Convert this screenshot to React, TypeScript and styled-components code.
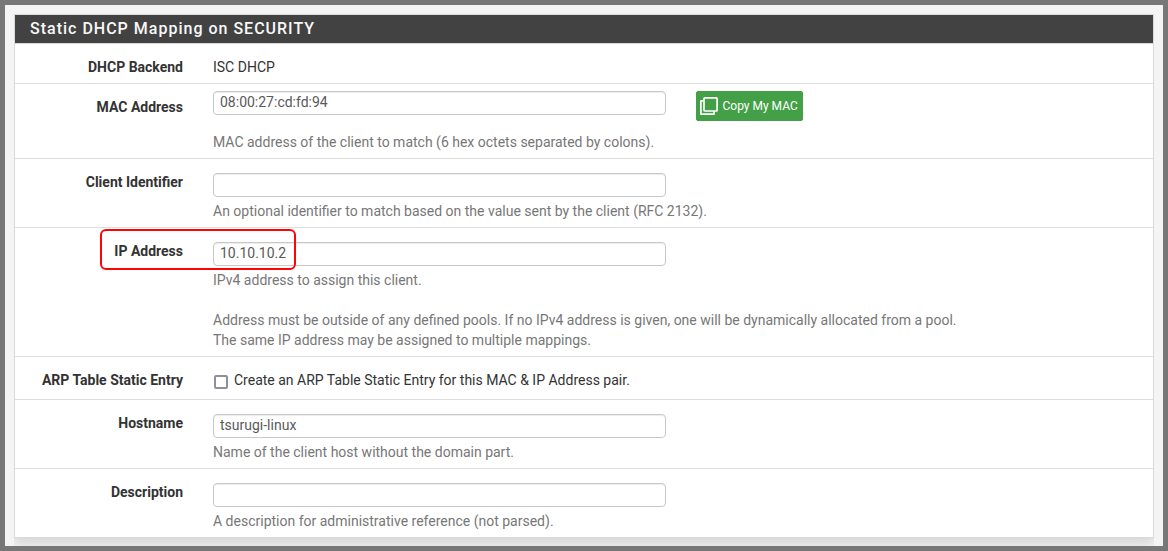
import React from 'react';
import styled, { createGlobalStyle } from 'styled-components';

const GlobalStyle = createGlobalStyle`
  *, *::before, *::after { box-sizing: border-box; }
  body {
    margin: 0;
    font-family: Roboto, "Liberation Sans", sans-serif;
    font-size: 14px;
    line-height: 20px;
    color: #333;
    background: #777;
  }
`;

const Page = styled.main`
  height: 551px;
  border: 5px solid #777;
  background: #f4f4f4;
  padding: 9px 9px 0;
  overflow: hidden;
`;

const Panel = styled.section`
  border: 1px solid #d9d9d9;
  background: #fff;
  box-shadow: 0 6px 12px rgba(0, 0, 0, 0.13);
  clip-path: inset(0 0 -20px 0);
`;

const PanelTitle = styled.h2`
  margin: 0;
  height: 29px;
  padding: 3px 15px 0;
  border-bottom: 1px solid #d9d9d9;
  background: #424242;
  color: #f8f8f8;
  font-size: 16px;
  font-weight: 500;
  line-height: 21px;
  letter-spacing: 1px;
`;

const Row = styled.div<{ $bottom?: number }>`
  position: relative;
  display: flex;
  padding-bottom: ${({ $bottom = 6 }) => $bottom}px;
  border-bottom: 1px solid #dedede;

  &:last-child {
    border-bottom: 0;
  }
`;

const Label = styled.label`
  width: 168px;
  margin-right: 30px;
  padding-top: 13px;
  text-align: right;
  font-weight: 700;
`;

const Field = styled.div<{ $top?: number }>`
  flex: 1;
  padding-top: ${({ $top = 14 }) => $top}px;
`;

const Controls = styled.div`
  display: flex;
  align-items: flex-start;
  gap: 30px;
  margin-bottom: 11px;
`;

const TextInput = styled.input<{ $lift?: number }>`
  display: block;
  width: 453px;
  height: 24px;
  margin: 0;
  padding: 0 6px ${({ $lift = 0 }) => $lift}px;
  border: 1px solid #c8c8c8;
  border-radius: 4px;
  background: #fff;
  box-shadow: inset 0 1px 1px rgba(0, 0, 0, 0.075);
  color: #5a5a5a;
  font: inherit;
  outline: 0;
`;

const Help = styled.p<{ $gap?: number }>`
  margin: ${({ $gap = 4 }) => $gap}px 0 0;
  color: #777;
`;

const CopyButton = styled.button`
  display: flex;
  align-items: center;
  gap: 4.5px;
  width: 107px;
  height: 30px;
  padding: 0 0 0 3px;
  border: 1px solid #43a047;
  border-radius: 2px;
  background: #43a047;
  color: #fff;
  font: 12px/18px Roboto, sans-serif;
  white-space: nowrap;
`;

const CheckLine = styled.label`
  display: flex;
  height: 20px;
`;

const Checkbox = styled.input`
  appearance: none;
  width: 14px;
  height: 14px;
  margin: 5px 6px 0 1px;
  border: 2px solid #8f8f9d;
  border-radius: 2px;
  background: #fff;
`;

const Highlight = styled.span`
  position: absolute;
  left: 85px;
  top: 1px;
  width: 196px;
  height: 41px;
  border: 2px solid #fc0505;
  border-radius: 6px;
  pointer-events: none;
`;

const CloneIcon = () => (
  <svg width="18" height="18" viewBox="0 0 18 18" fill="none" stroke="#fff" strokeWidth="1.7" strokeLinejoin="round">
    <rect x="4" y="0.9" width="13.1" height="13.1" rx="0.8" />
    <path d="M4 3.9H0.9V17.1H14.1V14" />
  </svg>
);

export default function App() {
  return (
    <>
      <GlobalStyle />
      <Page>
        <Panel>
          <PanelTitle>Static DHCP Mapping on SECURITY</PanelTitle>
          <Row>
            <Label as="span">DHCP Backend</Label>
            <Field $top={13}>ISC DHCP</Field>
          </Row>
          <Row>
            <Label htmlFor="mac">MAC Address</Label>
            <Field $top={7}>
              <Controls>
                <TextInput id="mac" $lift={2} defaultValue="08:00:27:cd:fd:94" />
                <CopyButton type="button">
                  <CloneIcon />
                  Copy My MAC
                </CopyButton>
              </Controls>
              <Help $gap={0}>MAC address of the client to match (6 hex octets separated by colons).</Help>
            </Field>
          </Row>
          <Row>
            <Label htmlFor="cid">Client Identifier</Label>
            <Field>
              <TextInput id="cid" />
              <Help>An optional identifier to match based on the value sent by the client (RFC 2132).</Help>
            </Field>
          </Row>
          <Row>
            <Label htmlFor="ip">IP Address</Label>
            <Field>
              <TextInput id="ip" $lift={2} defaultValue="10.10.10.2" />
              <Help>
                IPv4 address to assign this client.
                <br />
                <br />
                Address must be outside of any defined pools. If no IPv4 address is given, one will be dynamically
                allocated from a pool.
                <br />
                The same IP address may be assigned to multiple mappings.
              </Help>
            </Field>
            <Highlight />
          </Row>
          <Row $bottom={9}>
            <Label as="span">ARP Table Static Entry</Label>
            <Field $top={13}>
              <CheckLine>
                <Checkbox type="checkbox" />
                Create an ARP Table Static Entry for this MAC &amp; IP Address pair.
              </CheckLine>
            </Field>
          </Row>
          <Row>
            <Label htmlFor="host">Hostname</Label>
            <Field>
              <TextInput id="host" $lift={2} defaultValue="tsurugi-linux" />
              <Help>Name of the client host without the domain part.</Help>
            </Field>
          </Row>
          <Row>
            <Label htmlFor="descr">Description</Label>
            <Field>
              <TextInput id="descr" />
              <Help>A description for administrative reference (not parsed).</Help>
            </Field>
          </Row>
        </Panel>
      </Page>
    </>
  );
}
